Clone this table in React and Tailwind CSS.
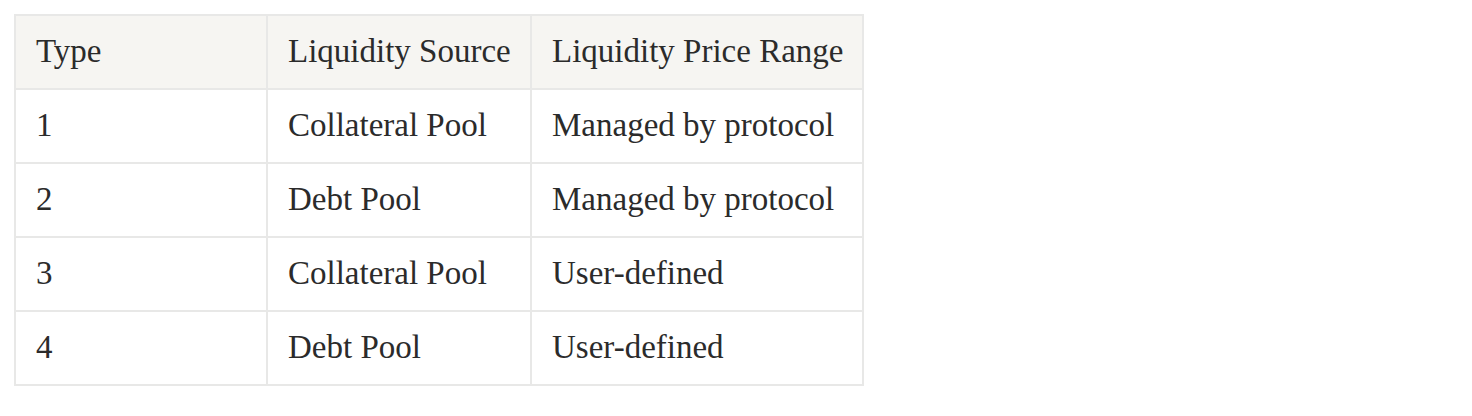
export default function App() {
  const rows = [
    ["1", "Collateral Pool", "Managed by protocol"],
    ["2", "Debt Pool", "Managed by protocol"],
    ["3", "Collateral Pool", "User-defined"],
    ["4", "Debt Pool", "User-defined"],
  ];
  const header = ["Type", "Liquidity Source", "Liquidity Price Range"];
  const cell =
    "h-[74px] flex items-center pl-5 border-r-2 border-b-2 border-[#e8e8e7] whitespace-nowrap";
  return (
    <div
      className="w-[1472px] h-[416px] bg-white pt-[14px] pl-[14px] text-[33px] text-[#2b2b2b]"
      style={{ fontFamily: '"Liberation Serif", serif' }}
    >
      <div className="grid grid-cols-[252px_264px_332px] w-[850px] border-t-2 border-l-2 border-[#e8e8e7]">
        {header.map((h) => (
          <div key={h} className={cell + " bg-[#f6f5f2]"}>
            {h}
          </div>
        ))}
        {rows.map((r, i) =>
          r.map((c, j) => (
            <div key={i + "-" + j} className={cell}>
              {c}
            </div>
          ))
        )}
      </div>
    </div>
  );
}
